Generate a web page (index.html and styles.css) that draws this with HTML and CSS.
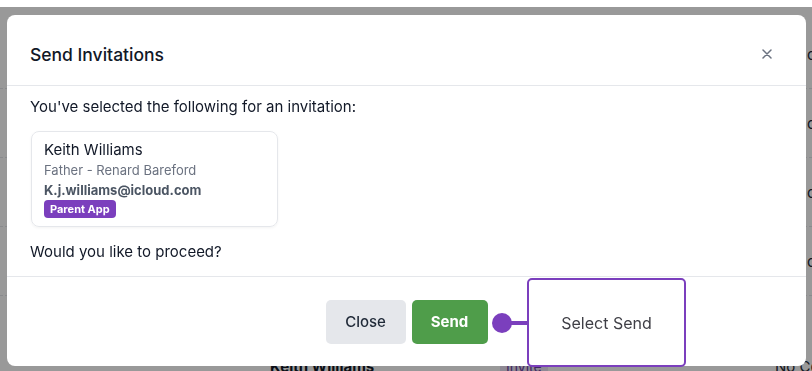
FILE: index.html
```html
<!DOCTYPE html>
<html lang="en">
<head>
    <meta charset="UTF-8">
    <meta name="viewport" content="width=device-width, initial-scale=1.0">
    <title>Send Invitations</title>
    <link rel="stylesheet" href="styles.css">
</head>
<body>

    <!-- Page behind the dialog -->
    <div class="page">
        <div class="row">
            <span class="cell-name"></span>
            <span class="cell-invite"></span>
            <span class="cell-edge">c</span>
        </div>
        <div class="row">
            <span class="cell-name"></span>
            <span class="cell-invite"></span>
            <span class="cell-edge">c</span>
        </div>
        <div class="row">
            <span class="cell-name"></span>
            <span class="cell-invite"></span>
            <span class="cell-edge">c</span>
        </div>
        <div class="row">
            <span class="cell-name"></span>
            <span class="cell-invite"></span>
            <span class="cell-edge">c</span>
        </div>
        <div class="row row-last">
            <span class="cell-name">Keith Williams</span>
            <span class="cell-invite"><span class="chip">Invite</span></span>
            <span class="cell-status">No Co</span>
        </div>
    </div>

    <!-- Backdrop -->
    <div class="backdrop"></div>

    <!-- Dialog -->
    <div class="modal">
        <div class="modal-header">
            <h2>Send Invitations</h2>
            <button class="close-x" aria-label="Close">
                <svg width="10" height="10" viewBox="0 0 10 10">
                    <path d="M1 1 L9 9 M9 1 L1 9" stroke="#6b7280" stroke-width="1.5" stroke-linecap="round"/>
                </svg>
            </button>
        </div>

        <div class="modal-body">
            <p>You've selected the following for an invitation:</p>
            <div class="contact-card">
                <div class="contact-name">Keith Williams</div>
                <div class="contact-role">Father - Renard Bareford</div>
                <div class="contact-email">K.j.williams@icloud.com</div>
                <span class="badge">Parent App</span>
            </div>
            <p>Would you like to proceed?</p>
        </div>

        <div class="modal-footer">
            <button class="btn btn-close">Close</button>
            <button class="btn btn-send">Send</button>

            <!-- Walkthrough hint -->
            <div class="hint">
                <span class="hint-dot"></span>
                <span class="hint-line"></span>
                <div class="hint-box">Select Send</div>
            </div>
        </div>
    </div>

</body>
</html>
```

FILE: styles.css
```css
body {
    font-family: "Inter", "Liberation Sans", sans-serif;
    background-color: #fff;
    color: #111827;
    margin: 0;
    padding: 0;
    overflow: hidden;
}

/* Page behind */
.page {
    padding-top: 20px;
    height: 351px;
    overflow: hidden;
}

.row {
    display: flex;
    align-items: center;
    height: 68px;
    border-bottom: 1px dashed #e5e7eb;
    font-size: 15px;
    white-space: nowrap;
}

.row-last {
    height: 140px;
    border-bottom: none;
}

.cell-name {
    flex: 0 0 500px;
    padding-left: 270px;
    box-sizing: border-box;
    font-weight: 700;
}

.cell-invite {
    flex: 0 0 275px;
}

.cell-status {
    color: #1f2937;
}

.cell-edge {
    margin-left: 32px;
    color: #1f2937;
}

.chip {
    display: inline-block;
    background: #ede4f7;
    color: #6b3fa0;
    padding: 2px 6px;
    font-size: 14px;
}

/* Backdrop */
.backdrop {
    position: fixed;
    top: 7px;
    left: 0;
    right: 0;
    bottom: 0;
    background: rgba(0, 0, 0, 0.4);
}

/* Dialog */
.modal {
    position: fixed;
    top: 15px;
    left: 7px;
    width: 799px;
    height: 351px;
    background: #fff;
    border-radius: 8px;
    display: flex;
    flex-direction: column;
}

.modal-header {
    display: flex;
    align-items: center;
    justify-content: space-between;
    box-sizing: border-box;
    padding: 8px 34px 0 23px;
    border-bottom: 1px solid #e5e7eb;
    flex: 0 0 71px;
}

.modal-header h2 {
    margin: 0;
    font-size: 17.5px;
    font-weight: 500;
    color: #111827;
}

.close-x {
    border: none;
    background: none;
    padding: 0;
    display: flex;
    cursor: pointer;
}

.modal-body {
    padding: 11px 23px 14px 23px;
    border-bottom: 1px solid #e5e7eb;
}

.modal-body p {
    margin: 0;
    font-size: 15px;
    line-height: 20px;
    color: #111827;
}

.contact-card {
    display: flex;
    flex-direction: column;
    align-items: flex-start;
    width: 221px;
    margin: 14px 0 15px 1px;
    padding: 8px 12px;
    border: 1px solid #e5e7eb;
    border-radius: 8px;
    box-shadow: 0 1px 3px rgba(0, 0, 0, 0.05);
}

.contact-name {
    font-size: 15px;
    line-height: 20px;
    color: #111827;
}

.contact-role {
    font-size: 13px;
    line-height: 20px;
    color: #6b7280;
}

.contact-email {
    font-size: 13px;
    line-height: 20px;
    font-weight: 700;
    color: #4b5563;
}

.badge {
    background: #7b3fbd;
    color: #fff;
    font-size: 11px;
    font-weight: 700;
    line-height: 18px;
    padding: 0 6px;
    border-radius: 4px;
}

.modal-footer {
    position: relative;
    flex: 1;
    display: flex;
    align-items: center;
    justify-content: center;
    gap: 6px;
}

.btn {
    border: none;
    border-radius: 5px;
    height: 44px;
    font-family: inherit;
    font-size: 15px;
    cursor: pointer;
}

.btn-close {
    width: 80px;
    background: #e5e7eb;
    color: #1f2937;
    font-weight: 500;
}

.btn-send {
    width: 76px;
    background: #4f9d4a;
    color: #fff;
    font-weight: 700;
}

/* Walkthrough hint */
.hint {
    position: absolute;
    left: 485px;
    top: 1px;
    display: flex;
    align-items: center;
}

.hint-dot {
    width: 20px;
    height: 20px;
    border-radius: 50%;
    background: #7b3fbd;
}

.hint-line {
    width: 17px;
    height: 4px;
    margin-left: -2px;
    background: #7b3fbd;
}

.hint-box {
    box-sizing: border-box;
    width: 159px;
    height: 89px;
    border: 2px solid #7b3fbd;
    border-radius: 5px;
    background: #fff;
    display: flex;
    align-items: center;
    justify-content: center;
    font-size: 16px;
    color: #3f3f46;
}
```
